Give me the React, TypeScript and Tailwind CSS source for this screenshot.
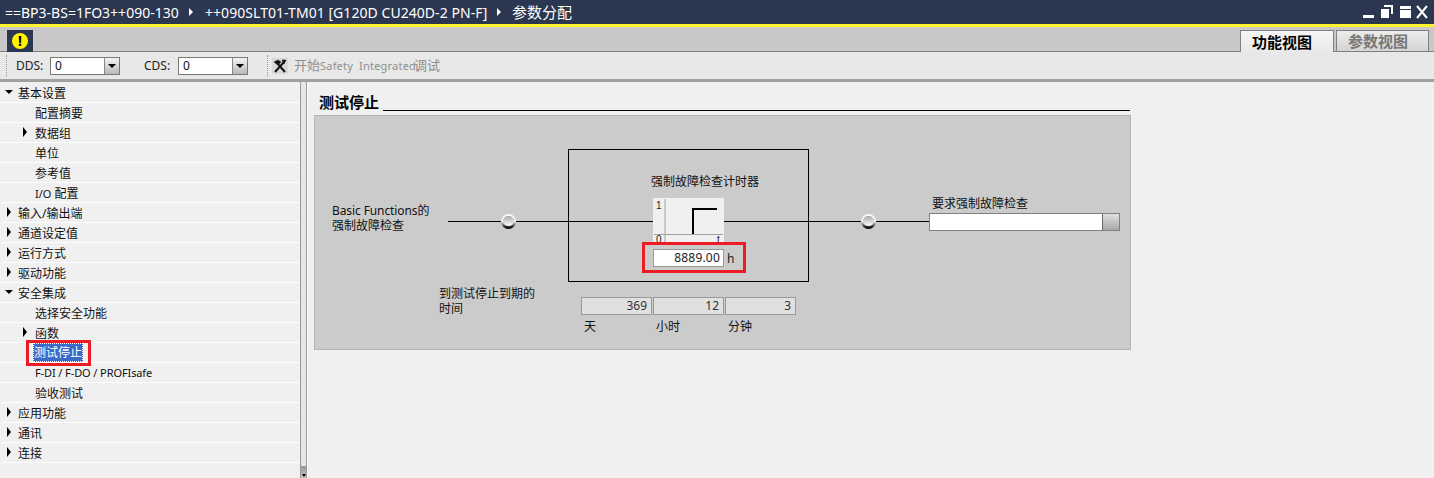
import { Fragment } from 'react';

const cjk = '"Noto Sans","Noto Sans CJK SC",sans-serif';

const tree = [
  { label: '基本设置', arrow: 'down', level: 0 },
  { label: '配置摘要', level: 1 },
  { label: '数据组', arrow: 'right', level: 1 },
  { label: '单位', level: 1 },
  { label: '参考值', level: 1 },
  { label: 'I/O', suffix: ' 配置', level: 1 },
  { label: '输入/输出端', arrow: 'right', level: 0 },
  { label: '通道设定值', arrow: 'right', level: 0 },
  { label: '运行方式', arrow: 'right', level: 0 },
  { label: '驱动功能', arrow: 'right', level: 0 },
  { label: '安全集成', arrow: 'down', level: 0 },
  { label: '选择安全功能', level: 1 },
  { label: '函数', arrow: 'right', level: 1 },
  { label: '测试停止', level: 1, selected: true },
  { label: 'F-DI / F-DO / PROFIsafe', level: 1, small: true },
  { label: '验收测试', level: 1 },
  { label: '应用功能', arrow: 'right', level: 0 },
  { label: '通讯', arrow: 'right', level: 0 },
  { label: '连接', arrow: 'right', level: 0 },
];

const Arrow = ({ dir }: { dir?: string }) => {
  if (dir === 'down')
    return <span className="w-0 h-0 border-x-[4px] border-x-transparent border-t-[4px] border-t-black" />;
  if (dir === 'right')
    return <span className="w-0 h-0 border-y-[5px] border-y-transparent border-l-[4px] border-l-black" />;
  return null;
};

const Combo = ({ label, className }: { label: string; className: string }) => (
  <div className={`flex items-center ${className}`}>
    <span className="w-[34px] text-[12px] text-[#222]">{label}</span>
    <div className="flex w-[70px] h-[18px] border border-[#777] bg-white text-[12px] leading-[16px]">
      <span className="flex-1 pl-[4px] text-[#111]">0</span>
      <span className="w-[15px] flex items-center justify-center border-l border-[#888] bg-gradient-to-b from-[#f4f4f4] to-[#b8b8b8]">
        <span className="w-0 h-0 border-x-[4px] border-x-transparent border-t-[4px] border-t-black" />
      </span>
    </div>
  </div>
);

const Knob = ({ className }: { className: string }) => (
  <div className={`absolute w-[15px] h-[15px] rounded-full bg-gradient-to-b from-white via-[#eeeeee] to-black p-[2px] ${className}`}>
    <div className="w-full h-[10px] rounded-full bg-gradient-to-b from-[#a8a8a8] to-white" />
  </div>
);

const WindowButtons = () => (
  <svg width="66" height="14" viewBox="0 0 66 14" fill="#fff">
    <rect x="0" y="10" width="11" height="3" />
    <path d="M18 4h8v9h-8z" />
    <path d="M21 0h9v9h-2V2h-7z" />
    <rect x="37" y="1" width="11" height="3" />
    <rect x="37" y="5" width="11" height="8" />
    <path d="M54 1l10 12M64 1L54 13" stroke="#fff" strokeWidth="2" fill="none" />
  </svg>
);

export default function App() {
  return (
    <div className="w-[1434px] h-[478px] overflow-hidden flex flex-col bg-[#f0f0f0] text-black" style={{ fontFamily: cjk }}>
      {/* title */}
      <header className="h-[24px] shrink-0 flex items-center justify-between bg-[#2b3650] pl-[5px] pr-[5px] text-white text-[14px] whitespace-nowrap">
        <div className="flex items-center">
          <span className="w-[184px]">==BP3-BS=1FO3++090-130</span>
          <span className="w-0 h-0 border-y-[4px] border-y-transparent border-l-[4px] border-l-white" />
          <span className="ml-[12px] w-[292px] tracking-[0.05px]">++090SLT01-TM01 [G120D CU240D-2 PN-F]</span>
          <span className="w-0 h-0 border-y-[4px] border-y-transparent border-l-[4px] border-l-white" />
          <span className="ml-[11px] text-[15px]">参数分配</span>
        </div>
        <WindowButtons />
      </header>
      <div className="h-[3px] shrink-0 bg-[#fdf32f]" />

      {/* alert + tabs */}
      <div className="h-[25px] shrink-0 flex justify-between bg-[#c8c8c8] border-b border-[#808080] pl-[7px] pr-[5px] pt-[3px]">
        <div className="w-[26px] h-[22px] flex items-center justify-center bg-[#2b3650]">
          <div className="w-[16px] h-[16px] rounded-full bg-[#fff200] flex items-center justify-center text-[14px] leading-none font-bold">!</div>
        </div>
        <div className="flex items-start gap-[2px] text-[15px] font-bold">
          <div className="w-[94px] h-[23px] flex items-center pl-[11px] border border-b-0 border-[#808080] bg-gradient-to-b from-[#f6f6f6] to-[#e8e8e8]">功能视图</div>
          <div className="w-[93px] h-[21px] flex items-center pl-[11px] border border-b-0 border-[#808080] bg-gradient-to-b from-[#ececec] to-[#d4d4d4] text-[#777]">参数视图</div>
        </div>
      </div>

      {/* toolbar */}
      <div className="h-[27px] shrink-0 flex items-center bg-[#e8e8e8] pl-[6px]">
        <div className="h-[22px] border-l border-dotted border-[#999]" />
        <Combo label="DDS:" className="ml-[9px]" />
        <Combo label="CDS:" className="ml-[24px]" />
        <div className="ml-[19px] h-[22px] border-l border-dotted border-[#999]" />
        <div className="ml-[4px] w-[16px] h-[16px] flex items-center justify-center bg-[#d8d8d8]">
          <svg width="14" height="14" viewBox="0 0 14 14" fill="none" stroke="#111">
            <path d="M2 13L11 3" strokeWidth="2" />
            <path d="M12 13L4 4" strokeWidth="2" />
            <path d="M1 3l4-2 3 2-3 3z" fill="#111" strokeWidth="0.5" />
            <path d="M9 1h4l-2 4z" fill="#111" strokeWidth="0.5" />
          </svg>
        </div>
        <div className="ml-[6px] pt-[1px] flex items-baseline text-[13px] text-[#8f8f8f] whitespace-nowrap">
          开始
          <span className="text-[11px] tracking-[0.2px] w-[94px]">Safety&nbsp; Integrated</span>
          调试
        </div>
      </div>
      <div className="h-[3px] shrink-0 bg-[#a0a0a0]" />

      <div className="flex-1 flex min-h-0">
        {/* tree */}
        <aside className="w-[300px] shrink-0 pl-[1px] pr-[1px] pt-[1px]">
          {tree.map((item) => (
            <div key={item.label} className="relative h-[20px] pt-[2px] flex items-center border-b border-white text-[12px] text-[#111] whitespace-nowrap">
              <span className={`absolute top-[4px] flex items-center justify-center w-[10px] h-[10px] ${item.level ? 'left-[19px]' : 'left-[3px]'}`}>
                <Arrow dir={item.arrow} />
              </span>
              {item.selected ? (
                <Fragment>
                  <span className="ml-[32px] -mt-[2px] w-[50px] h-[19px] flex items-center justify-center bg-[#3a6bc9] border border-dotted border-white text-white">
                    {item.label}
                  </span>
                  <span className="absolute left-[25px] top-[-3px] w-[65px] h-[26px] border-[3px] border-[#ed1c24]" />
                </Fragment>
              ) : (
                <span className={`${item.level ? 'ml-[34px]' : 'ml-[17px]'} ${item.small ? 'text-[11px] tracking-[-0.1px]' : ''}`}>
                  {item.suffix ? <span className="text-[11px]">{item.label}</span> : item.label}
                  {item.suffix}
                </span>
              )}
            </div>
          ))}
        </aside>

        {/* scrollbar */}
        <div className="w-[8px] shrink-0 flex border-r border-white">
          <div className="flex-1 flex flex-col border-x border-[#999] bg-[#e6e6e6]">
            <div className="flex-1" />
            <div className="h-[12px] flex items-end justify-center pb-[1px] bg-gradient-to-b from-[#999999] to-[#c4c4c4]">
              <span className="w-0 h-0 border-x-[2px] border-x-transparent border-t-[3px] border-t-black" />
            </div>
          </div>
        </div>

        {/* content */}
        <main className="flex-1 min-w-0 pl-[6px] pt-[12px]">
          <div className="w-[816px] flex items-end h-[17px]">
            <span className="ml-[5px] text-[15px] leading-[17px] font-bold whitespace-nowrap">测试停止</span>
            <span className="ml-[4px] flex-1 border-b border-black" />
          </div>
          <div className="relative mt-[4px] w-[817px] h-[235px] bg-[#cbcbcb] border border-[#b4b4b4] text-[12px] leading-[15px] text-[#111] whitespace-nowrap">
            <div className="absolute left-[17px] top-[87px]">
              <span className="tracking-[-0.1px]">Basic Functions</span>的
              <br />
              强制故障检查
            </div>

            <div className="absolute left-[133px] top-[105px] w-[121px] h-px bg-black" />
            <Knob className="left-[186px] top-[98px]" />

            <div className="absolute left-[253px] top-[33px] w-[241px] h-[133px] border border-black" />
            <div className="absolute left-[336px] top-[58px]">强制故障检查计时器</div>

            <div className="absolute left-[254px] top-[105px] w-[84px] h-px bg-black" />
            <div className="absolute left-[409px] top-[105px] w-[205px] h-px bg-black" />
            <Knob className="left-[546px] top-[98px]" />

            <div className="absolute left-[338px] top-[82px] w-[71px] h-[46px] bg-[#f0f0f0] overflow-hidden">
              <svg width="71" height="46" viewBox="0 0 71 46" fontFamily="Liberation Sans" fontSize="10" fill="#222">
                <path d="M12 1v45M1 36.5h69" stroke="#a0a0a0" strokeWidth="1" fill="none" />
                <path d="M40 36V11h24" stroke="#000" strokeWidth="2" fill="none" />
                <text x="3" y="11">1</text>
                <text x="3" y="45">0</text>
                <text x="64" y="45">t</text>
              </svg>
            </div>
            <div className="absolute left-[327px] top-[126px] w-[104px] h-[31px] border-[3px] border-[#ed1c24]" />
            <div className="absolute left-[338px] top-[133px] w-[71px] h-[18px] border border-[#999] bg-white pr-[3px] text-right text-[12px] leading-[16px] tracking-[0.2px] text-[#222]">
              8889.00
            </div>
            <div className="absolute left-[412px] top-[135px] text-[12px] text-[#222]">h</div>

            <div className="absolute left-[124px] top-[170px]">
              到测试停止到期的
              <br />
              时间
            </div>

            <div className="absolute left-[266px] top-[181px] grid grid-cols-3 gap-x-px w-[215px]">
              {[
                ['369', '天'],
                ['12', '小时'],
                ['3', '分钟'],
              ].map(([value, unit]) => (
                <div key={unit}>
                  <div className="h-[18px] border border-[#999] bg-[#e0e0e0] pr-[4px] text-right leading-[16px] text-[#333]">{value}</div>
                  <div className="mt-[4px] pl-[3px]">{unit}</div>
                </div>
              ))}
            </div>

            <div className="absolute left-[617px] top-[80px]">要求强制故障检查</div>
            <div className="absolute left-[614px] top-[97px] flex w-[191px] h-[18px] border border-[#808080] bg-white">
              <div className="flex-1" />
              <div className="w-[17px] border-l border-[#666] bg-gradient-to-b from-[#e0e0e0] to-[#a8a8a8]" />
            </div>
          </div>
        </main>
      </div>
    </div>
  );
}
